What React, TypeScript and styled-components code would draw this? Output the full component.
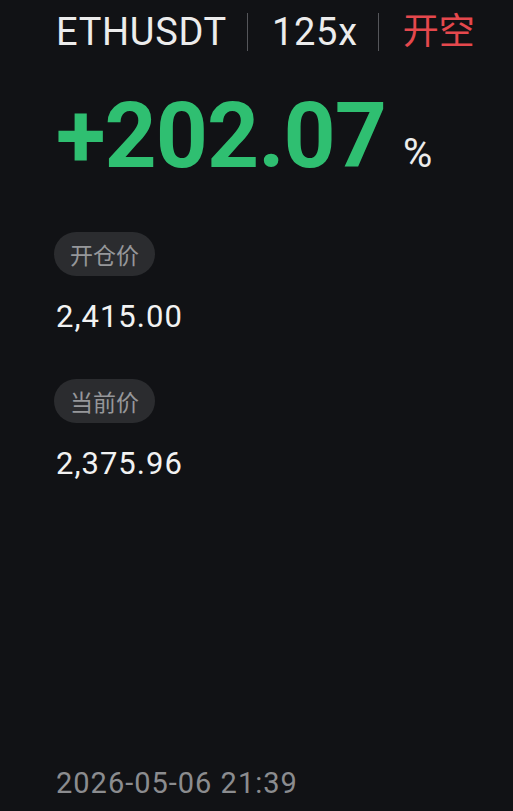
import React from "react";
import styled, { createGlobalStyle } from "styled-components";

const Global = createGlobalStyle`
  html, body { margin: 0; padding: 0; background: #111215; }
  body { font-family: Roboto, "Noto Sans CJK SC", sans-serif; }
`;

const Page = styled.div`
  width: 513px;
  height: 811px;
  box-sizing: border-box;
  padding: 12px 0 0 56px;
  display: flex;
  flex-direction: column;
  background: #111215;
  color: #f2f2f2;
  overflow: hidden;
`;

const Header = styled.div`
  display: flex;
  align-items: center;
  height: 40px;
`;

const HeadText = styled.span<{ $red?: boolean }>`
  font-family: Roboto, "Noto Sans CJK SC", sans-serif;
  font-size: ${(p) => (p.$red ? "36px" : "38px")};
  letter-spacing: ${(p) => (p.$red ? "0" : "0.7px")};
  line-height: 40px;
  color: ${(p) => (p.$red ? "#e5484d" : "#ececec")};
`;

const Sep = styled.span`
  width: 1px;
  height: 38px;
  background: #55565a;
  margin: 0 24px 0 20px;
`;

const Profit = styled.div`
  display: flex;
  align-items: baseline;
  margin-top: 34px;
`;

const Big = styled.span`
  font-family: Roboto, sans-serif;
  font-weight: 700;
  font-size: 91px;
  line-height: 100px;
  color: #2fbf71;
  letter-spacing: -1px;
`;

const Pct = styled.span`
  font-family: Roboto, sans-serif;
  font-size: 40px;
  color: #ececec;
  margin-left: 17px;
`;

const Field = styled.div<{ $top: number }>`
  display: flex;
  flex-direction: column;
  align-items: flex-start;
  margin-top: ${(p) => p.$top}px;
`;

const Pill = styled.div`
  height: 44px;
  margin-left: -2px;
  padding: 0 16px;
  border-radius: 22px;
  background: #2b2c2f;
  color: #96979a;
  font-family: "Noto Sans CJK SC", sans-serif;
  font-size: 23px;
  display: flex;
  align-items: center;
`;

const Value = styled.div`
  margin-top: 24px;
  font-family: Roboto, sans-serif;
  font-size: 31px;
  letter-spacing: 1px;
  line-height: 34px;
  color: #f2f2f2;
`;

const Spacer = styled.div`
  flex: 1;
`;

const DateText = styled.div`
  font-family: Roboto, sans-serif;
  font-size: 29px;
  letter-spacing: 1px;
  line-height: 34px;
  color: #8b8c8f;
  margin-bottom: 11px;
`;

export default function App() {
  return (
    <>
      <Global />
      <Page>
        <Header>
          <HeadText>ETHUSDT</HeadText>
          <Sep />
          <HeadText>125x</HeadText>
          <Sep />
          <HeadText $red>开空</HeadText>
        </Header>
        <Profit>
          <Big>+202.07</Big>
          <Pct>%</Pct>
        </Profit>
        <Field $top={46}>
          <Pill>开仓价</Pill>
          <Value>2,415.00</Value>
        </Field>
        <Field $top={45}>
          <Pill>当前价</Pill>
          <Value>2,375.96</Value>
        </Field>
        <Spacer />
        <DateText>2026-05-06 21:39</DateText>
      </Page>
    </>
  );
}
